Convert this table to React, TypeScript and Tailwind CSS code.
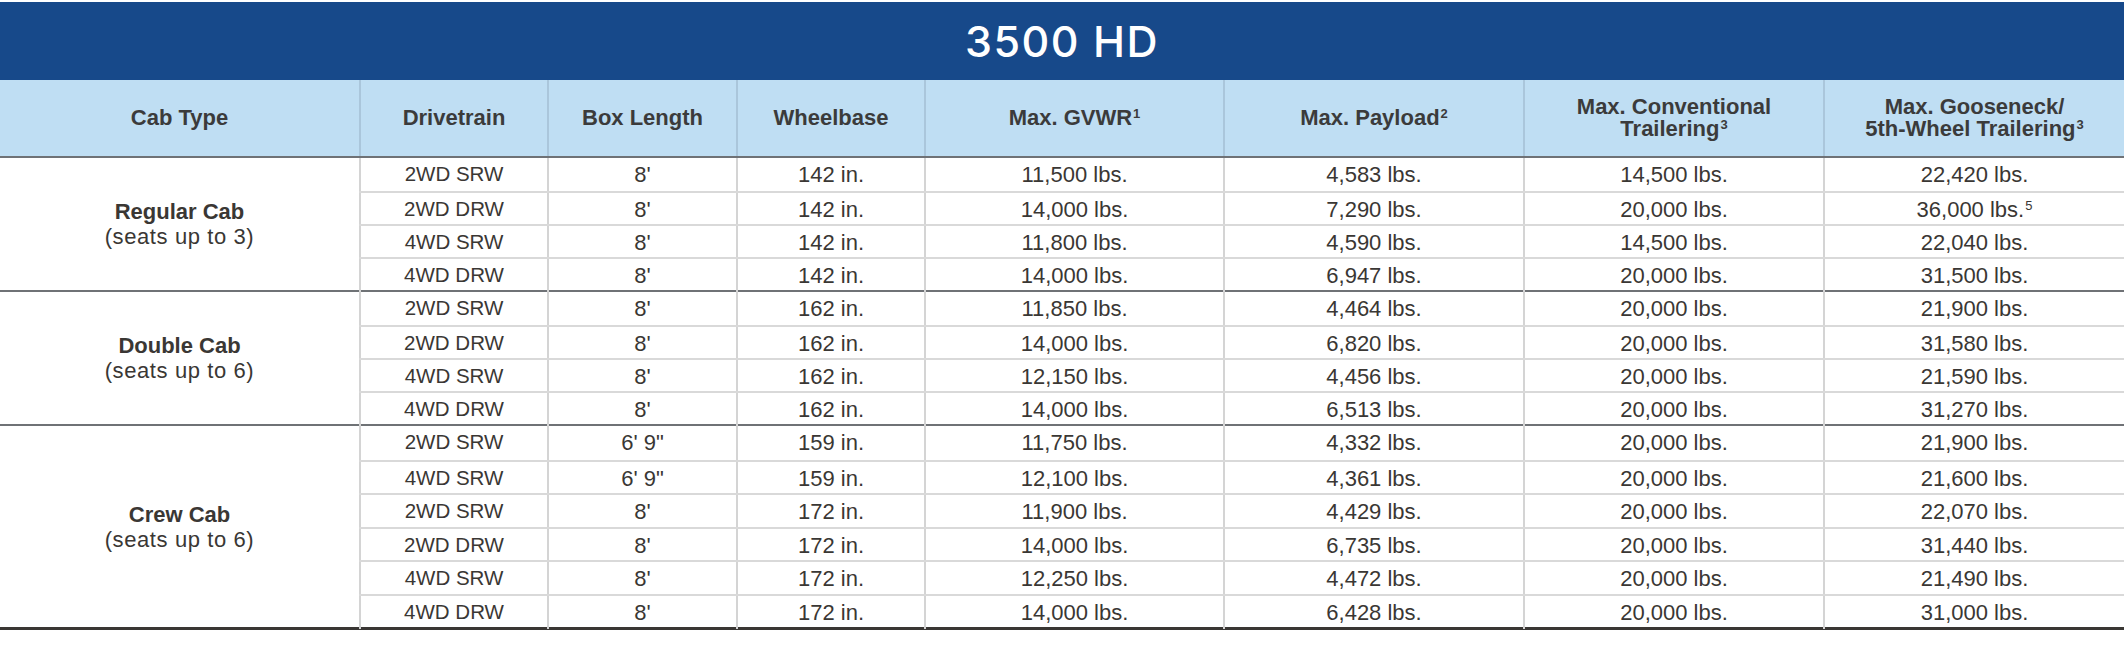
import React from "react";

type Row = [string, string, string, string, string, string, string, string?];

const groups: { name: string; seats: string; rowH: string; rows: Row[] }[] = [
  {
    name: "Regular Cab",
    seats: "(seats up to 3)",
    rowH: "h-[33px]",
    rows: [
      ["2WD SRW", "8'", "142 in.", "11,500 lbs.", "4,583 lbs.", "14,500 lbs.", "22,420 lbs."],
      ["2WD DRW", "8'", "142 in.", "14,000 lbs.", "7,290 lbs.", "20,000 lbs.", "36,000 lbs.", "5"],
      ["4WD SRW", "8'", "142 in.", "11,800 lbs.", "4,590 lbs.", "14,500 lbs.", "22,040 lbs."],
      ["4WD DRW", "8'", "142 in.", "14,000 lbs.", "6,947 lbs.", "20,000 lbs.", "31,500 lbs."],
    ],
  },
  {
    name: "Double Cab",
    seats: "(seats up to 6)",
    rowH: "h-[33px]",
    rows: [
      ["2WD SRW", "8'", "162 in.", "11,850 lbs.", "4,464 lbs.", "20,000 lbs.", "21,900 lbs."],
      ["2WD DRW", "8'", "162 in.", "14,000 lbs.", "6,820 lbs.", "20,000 lbs.", "31,580 lbs."],
      ["4WD SRW", "8'", "162 in.", "12,150 lbs.", "4,456 lbs.", "20,000 lbs.", "21,590 lbs."],
      ["4WD DRW", "8'", "162 in.", "14,000 lbs.", "6,513 lbs.", "20,000 lbs.", "31,270 lbs."],
    ],
  },
  {
    name: "Crew Cab",
    seats: "(seats up to 6)",
    rowH: "h-[33.5px]",
    rows: [
      ["2WD SRW", "6' 9\"", "159 in.", "11,750 lbs.", "4,332 lbs.", "20,000 lbs.", "21,900 lbs."],
      ["4WD SRW", "6' 9\"", "159 in.", "12,100 lbs.", "4,361 lbs.", "20,000 lbs.", "21,600 lbs."],
      ["2WD SRW", "8'", "172 in.", "11,900 lbs.", "4,429 lbs.", "20,000 lbs.", "22,070 lbs."],
      ["2WD DRW", "8'", "172 in.", "14,000 lbs.", "6,735 lbs.", "20,000 lbs.", "31,440 lbs."],
      ["4WD SRW", "8'", "172 in.", "12,250 lbs.", "4,472 lbs.", "20,000 lbs.", "21,490 lbs."],
      ["4WD DRW", "8'", "172 in.", "14,000 lbs.", "6,428 lbs.", "20,000 lbs.", "31,000 lbs."],
    ],
  },
];

const Sup = ({ n }: { n: string }) => (
  <span className="relative -top-[7px] text-[13px] leading-none ml-[1px]">{n}</span>
);

const HeadCell = ({ children, first }: { children: React.ReactNode; first?: boolean }) => (
  <div
    className={`flex items-center justify-center text-center leading-[22px] ${
      first ? "" : "border-l-2 border-[#aac6db]"
    }`}
  >
    <div>{children}</div>
  </div>
);

export default function App() {
  return (
    <div className="w-[2124px] h-[646px] bg-white pt-[2px] font-['Liberation_Sans',Arial,sans-serif] text-[#3a3734]">
      <div className="h-[78px] bg-[#17498a] flex items-center justify-center text-white font-['Inter','Liberation_Sans',sans-serif] font-medium text-[43px] tracking-[1.5px]">
        3500 HD
      </div>
      <div className="grid grid-cols-[359px_188px_189px_188px_299px_300px_300px_301px] h-[78px] bg-[#bfdef3] border-b-2 border-[#6f7276] text-[22px] font-bold text-[#3b3b3b]">
        <HeadCell first>Cab Type</HeadCell>
        <HeadCell>Drivetrain</HeadCell>
        <HeadCell>Box Length</HeadCell>
        <HeadCell>Wheelbase</HeadCell>
        <HeadCell>
          Max. GVWR<Sup n="1" />
        </HeadCell>
        <HeadCell>
          Max. Payload<Sup n="2" />
        </HeadCell>
        <HeadCell>
          Max. Conventional
          <br />
          Trailering<Sup n="3" />
        </HeadCell>
        <HeadCell>
          Max. Gooseneck/
          <br />
          5th-Wheel Trailering<Sup n="3" />
        </HeadCell>
      </div>
      {groups.map((g, gi) => (
        <div
          key={g.name}
          className={`flex ${gi > 0 ? "border-t-2 border-[#6f7276]" : ""}`}
        >
          <div className="w-[359px] flex flex-col items-center justify-center text-[22px] leading-[25px] text-center">
            <div className="font-bold">{g.name}</div>
            <div className="tracking-[0.6px]">{g.seats}</div>
          </div>
          <div className="flex-1 flex flex-col">
            {g.rows.map((r, ri) => (
              <div
                key={ri}
                className={`grid grid-cols-[188px_189px_188px_299px_300px_300px_301px] ${g.rowH} text-[22px] ${
                  ri > 0 ? "border-t-2 border-[#d9d9d9]" : ""
                }`}
              >
                {r.slice(0, 7).map((c, ci) => (
                  <div
                    key={ci}
                    className={`flex items-center justify-center border-l-2 border-[#d4d4d4] ${
                      ci === 0 ? "text-[20.5px]" : ""
                    }`}
                  >
                    <span>
                      {c}
                      {ci === 6 && r[7] ? <Sup n={r[7]} /> : null}
                    </span>
                  </div>
                ))}
              </div>
            ))}
          </div>
        </div>
      ))}
      <div className="border-t-[3px] border-[#3a3734]" />
    </div>
  );
}
